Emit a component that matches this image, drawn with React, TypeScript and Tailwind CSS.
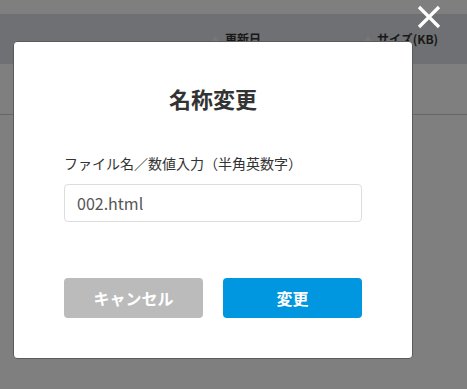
import React, { useState } from 'react';

const FONT = { fontFamily: '"Noto Sans CJK JP", "Noto Sans", sans-serif' };

function PageBehind() {
  // 背景のファイル一覧（オーバーレイで暗くなる）
  return (
    <div className="flex h-[389px] w-full flex-col bg-white">
      <div className="h-[14px] shrink-0" />
      <div className="flex h-[50px] shrink-0 items-center bg-[#dee0e6] pl-[211px] text-[12px] font-bold text-[#333]">
        <div className="flex w-[153px] items-center">
          <span className="w-[14px] text-[8px] text-[#eee]">▲</span>
          <span>更新日</span>
        </div>
        <div className="flex items-center">
          <span className="w-[13px] text-[8px] text-[#eee]">▲</span>
          <span>サイズ(KB)</span>
        </div>
      </div>
      <div className="h-[51px] shrink-0 border-b border-[#ccc]" />
    </div>
  );
}

export default function App() {
  const [name, setName] = useState('002.html');

  return (
    <div className="relative h-[389px] w-full overflow-hidden" style={FONT}>
      <PageBehind />

      {/* ── Overlay + modal ── */}
      <div className="absolute inset-0 bg-[rgba(0,0,0,0.5)] pl-[13px] pt-[41px]">
        <button
          type="button"
          aria-label="閉じる"
          className="absolute right-[26px] top-[5px] flex h-[24px] w-[24px] items-center justify-center"
        >
          <svg viewBox="0 0 24 24" className="h-[24px] w-[24px]" fill="none" stroke="#fff" strokeWidth="3.2">
            <path d="M2 2L22 22M22 2L2 22" />
          </svg>
        </button>

        <div className="flex w-[400px] flex-col rounded-[4px] border border-[#5a5a5a] bg-white px-[50px] pb-[40px] pt-[45px]">
          <h2 className="text-center text-[22px] font-bold leading-none text-[#333]">名称変更</h2>

          <label className="mt-[47px] text-[14px] leading-none text-[#333]">
            ファイル名／数値入力（半角英数字）
          </label>
          <input
            value={name}
            onChange={(e) => setName(e.target.value)}
            className="mt-[14px] h-[38px] w-full rounded-[4px] border border-[#ddd] px-[12px] text-[16px] text-[#555] outline-none"
            style={FONT}
          />

          <div className="mt-[56px] flex gap-[20px]">
            <button
              type="button"
              className="h-[40px] flex-1 rounded-[4px] bg-[#bbbbbb] text-[16px] font-bold text-white"
            >
              キャンセル
            </button>
            <button
              type="button"
              className="h-[40px] flex-1 rounded-[4px] bg-[#0096e0] text-[16px] font-bold text-white"
            >
              変更
            </button>
          </div>
        </div>
      </div>
    </div>
  );
}
